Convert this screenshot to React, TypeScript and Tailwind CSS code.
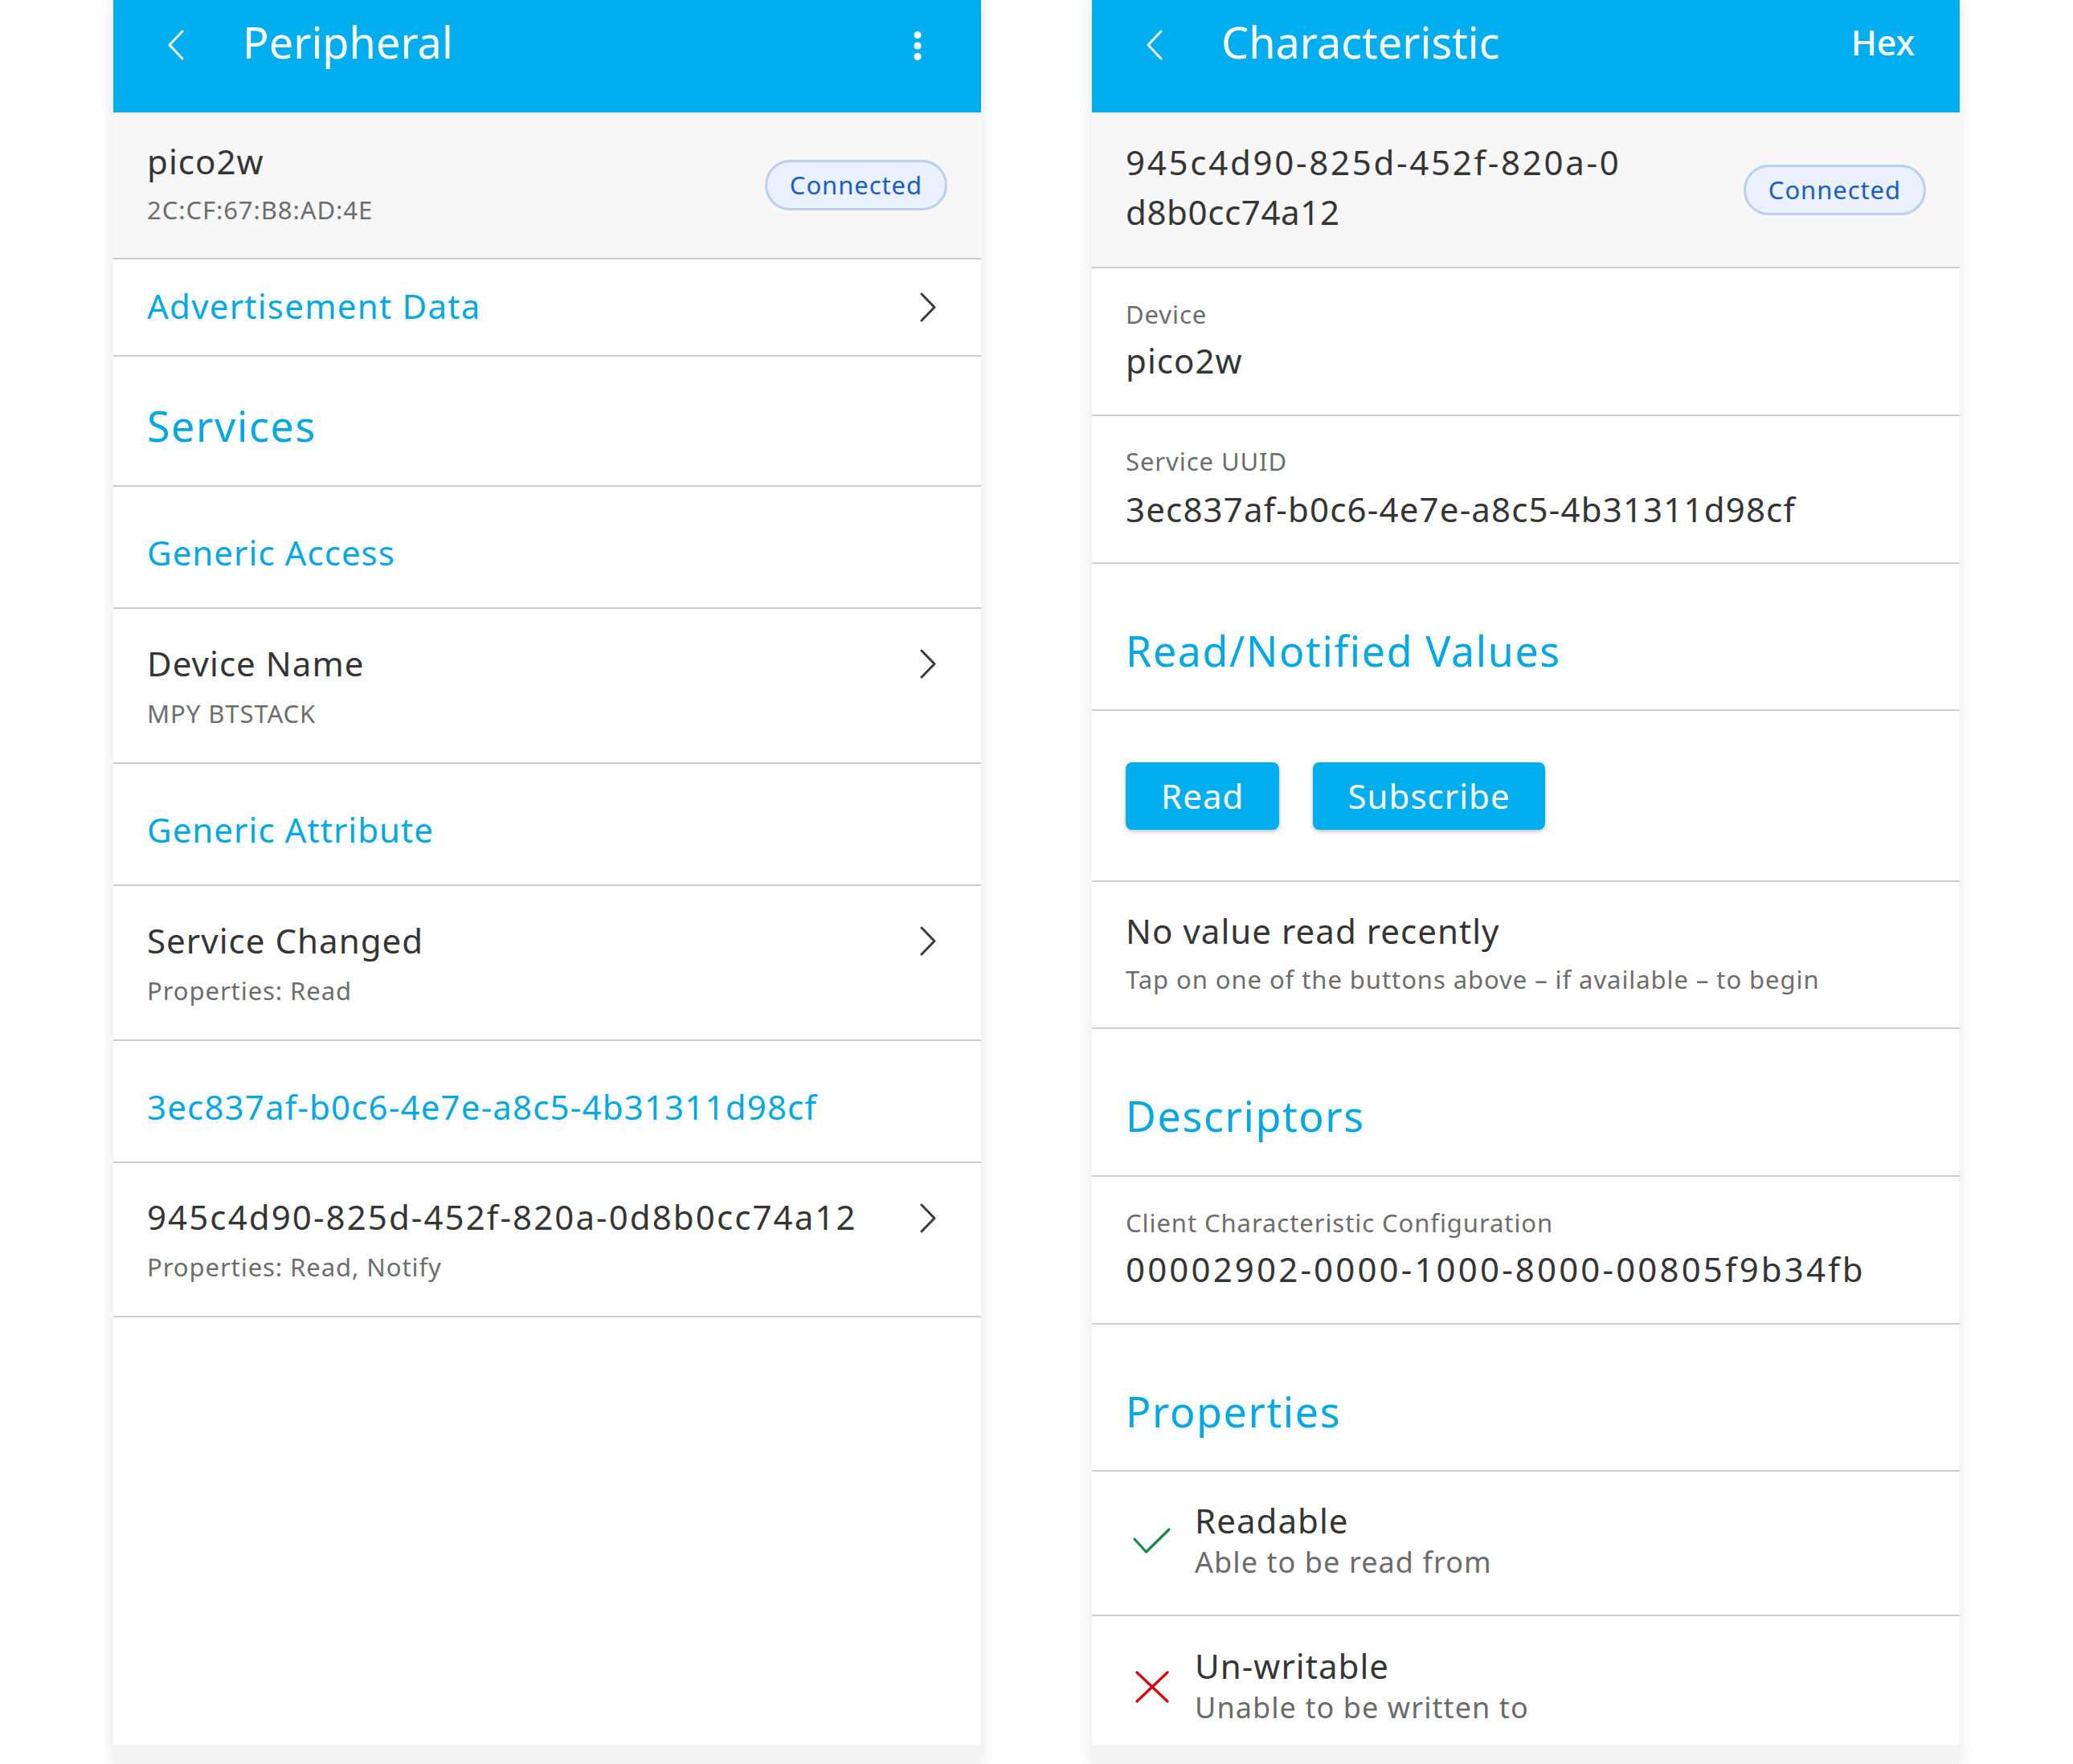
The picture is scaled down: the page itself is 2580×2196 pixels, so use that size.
import React from "react";

const BLUE = "text-[#05a8e4]";

function BackChevron() {
  return (
    <svg width="22" height="38" viewBox="0 0 22 38" className="shrink-0">
      <polyline points="19,2 3,19 19,36" fill="none" stroke="#ffffff" strokeWidth="2.8" strokeLinecap="round" strokeLinejoin="round" />
    </svg>
  );
}

function RowChevron({ className = "" }: { className?: string }) {
  return (
    <svg width="20" height="37" viewBox="0 0 20 37" className={"shrink-0 " + className}>
      <polyline points="2,2 18,18.5 2,35" fill="none" stroke="#3a3a3a" strokeWidth="3" strokeLinecap="round" strokeLinejoin="round" />
    </svg>
  );
}

function Kebab() {
  return (
    <svg width="10" height="36" viewBox="0 0 10 36" className="shrink-0 mt-[9px]">
      <circle cx="5" cy="4.5" r="4.5" fill="#ffffff" />
      <circle cx="5" cy="18" r="4.5" fill="#ffffff" />
      <circle cx="5" cy="31.5" r="4.5" fill="#ffffff" />
    </svg>
  );
}

function Header({ title, right }: { title: string; right: React.ReactNode }) {
  return (
    <div className="h-[140px] shrink-0 bg-[#00aeef]">
      <div className="h-[104px] flex items-center">
        <div className="ml-[67px] mt-[8px]">
          <BackChevron />
        </div>
        <div className="ml-[72px] text-[54px] leading-none text-white">{title}</div>
        <div className="flex-1" />
        {right}
      </div>
    </div>
  );
}

function Badge() {
  return (
    <div className="h-[63px] px-[28px] rounded-full border-[3px] border-[#b9cff1] bg-[#eaf1fc] flex items-center shrink-0">
      <span className="text-[31px] leading-none tracking-[0.03em] text-[#1b5cc7]">Connected</span>
    </div>
  );
}

const DIV = "border-b-2 border-[#c9cdd3]";
const PRIMARY = "text-[42px] text-[#353535]";
const T = "tracking-[0.025em]";
const SUB = "text-[31px] tracking-[0.03em] text-[#6d6d6d]";
const HEADING = "text-[52px] tracking-[0.03em] " + BLUE;

function GroupRow({ text, track = T }: { text: string; track?: string }) {
  return (
    <div className={"h-[152px] shrink-0 pt-[13px] px-[42px] flex items-center " + DIV}>
      <span className={"text-[42px] leading-none " + BLUE + " " + track}>{text}</span>
    </div>
  );
}

function CharRow({ title, sub, h, track = T }: { title: string; sub: string; h: string; track?: string }) {
  return (
    <div className={h + " shrink-0 pt-[4px] pl-[42px] pr-[56px] flex items-center justify-between " + DIV}>
      <div className="flex flex-col">
        <span className={PRIMARY + " leading-[64px] " + track}>{title}</span>
        <span className={SUB + " leading-[60px]"}>{sub}</span>
      </div>
      <RowChevron className="mb-[58px]" />
    </div>
  );
}

function LeftPanel() {
  return (
    <div className="w-[1080px] h-[2196px] shrink-0 flex flex-col bg-white shadow-[0_0_18px_rgba(0,0,0,0.10)]">
      <Header
        title="Peripheral"
        right={
          <div className="mr-[74px]">
            <Kebab />
          </div>
        }
      />
      <div className="flex-1 overflow-hidden flex flex-col">
        <div className={"h-[183px] shrink-0 bg-[#f7f7f7] px-[42px] flex items-center justify-between " + DIV}>
          <div className="flex flex-col">
            <span className={PRIMARY + " leading-[61px] " + T}>pico2w</span>
            <span className={SUB + " leading-[61px]"}>2C:CF:67:B8:AD:4E</span>
          </div>
          <Badge />
        </div>

        <div className={"h-[121px] shrink-0 pb-[4px] pl-[42px] pr-[56px] flex items-center justify-between " + DIV}>
          <span className={"text-[42px] tracking-[0.03em] leading-none " + BLUE}>Advertisement Data</span>
          <RowChevron className="mt-[4px]" />
        </div>

        <div className={"h-[162px] shrink-0 pt-[12px] px-[42px] flex items-center " + DIV}>
          <span className={HEADING + " leading-none"}>Services</span>
        </div>

        <GroupRow text="Generic Access" />
        <CharRow h="h-[193px]" title="Device Name" sub="MPY BTSTACK" />
        <GroupRow text="Generic Attribute" />
        <CharRow h="h-[193px]" title="Service Changed" sub="Properties: Read" />
        <GroupRow text="3ec837af-b0c6-4e7e-a8c5-4b31311d98cf" track="tracking-[0.028em]" />
        <CharRow
          h="h-[192px]"
          title="945c4d90-825d-452f-820a-0d8b0cc74a12"
          sub="Properties: Read, Notify"
          track="tracking-[0.05em]"
        />
      </div>
      <div className="h-[24px] shrink-0 bg-[#f4f4f4]" />
    </div>
  );
}

function InfoRow({ label, value, h, lead, pb, track = T }: { label: string; value: string; h: string; lead: string; pb: string; track?: string }) {
  return (
    <div className={h + " shrink-0 px-[42px] flex items-center " + pb + " " + DIV}>
      <div className="flex flex-col">
        <span className={SUB + " " + lead}>{label}</span>
        <span className={PRIMARY + " " + lead + " " + track}>{value}</span>
      </div>
    </div>
  );
}

function SectionRow({ text }: { text: string }) {
  return (
    <div className={"h-[183px] shrink-0 pt-[34px] px-[42px] flex items-center " + DIV}>
      <span className={HEADING + " leading-none"}>{text}</span>
    </div>
  );
}

function CheckIcon() {
  return (
    <svg width="48" height="34" viewBox="0 0 48 34" className="shrink-0">
      <polyline points="2,14 16.5,30 45,2" fill="none" stroke="#17894a" strokeWidth="3.2" strokeLinecap="round" strokeLinejoin="round" />
    </svg>
  );
}

function CrossIcon() {
  return (
    <svg width="42" height="40" viewBox="0 0 42 40" className="shrink-0">
      <line x1="2" y1="2" x2="40" y2="38" stroke="#d9000d" strokeWidth="3.2" strokeLinecap="round" />
      <line x1="40" y1="2" x2="2" y2="38" stroke="#d9000d" strokeWidth="3.2" strokeLinecap="round" />
    </svg>
  );
}

function PropRow({ icon, title, sub, border }: { icon: React.ReactNode; title: string; sub: string; border: boolean }) {
  return (
    <div className={"h-[180px] shrink-0 pl-[42px] flex items-center pb-[4px] " + (border ? DIV : "")}>
      <div className="w-[86px] shrink-0 flex items-center">{icon}</div>
      <div className="flex flex-col">
        <span className={PRIMARY + " leading-[52px] " + T}>{title}</span>
        <span className="text-[36px] tracking-[0.03em] text-[#6b6b6b] leading-[52px]">{sub}</span>
      </div>
    </div>
  );
}

function RightPanel() {
  return (
    <div className="w-[1080px] h-[2196px] shrink-0 flex flex-col bg-white shadow-[0_0_18px_rgba(0,0,0,0.10)]">
      <Header
        title="Characteristic"
        right={<span className="mr-[56px] text-[43px] font-medium leading-none text-white">Hex</span>}
      />
      <div className="flex-1 overflow-hidden flex flex-col">
        <div className={"h-[194px] shrink-0 bg-[#f7f7f7] px-[42px] pb-[7px] flex items-center justify-between " + DIV}>
          <div className="flex flex-col">
            <span className={PRIMARY + " leading-[62px] tracking-[0.065em]"}>945c4d90-825d-452f-820a-0</span>
            <span className={PRIMARY + " leading-[62px] tracking-[0.015em]"}>d8b0cc74a12</span>
          </div>
          <div className="pt-[7px]">
            <Badge />
          </div>
        </div>

        <InfoRow h="h-[184px]" label="Device" value="pico2w" lead="leading-[58px]" pb="pb-[10px]" />
        <InfoRow
          h="h-[184px]"
          label="Service UUID"
          value="3ec837af-b0c6-4e7e-a8c5-4b31311d98cf"
          lead="leading-[59px]"
          pb="pb-[11px]"
          track="tracking-[0.028em]"
        />
        <SectionRow text="Read/Notified Values" />

        <div className={"h-[213px] shrink-0 px-[42px] flex items-center gap-[42px] " + DIV}>
          <button className="h-[84px] px-[44px] rounded-[8px] bg-[#00aeef] text-white text-[42px] tracking-[0.025em] leading-none shadow-[0_2px_5px_rgba(0,0,0,0.25)]">
            Read
          </button>
          <button className="h-[84px] px-[43px] rounded-[8px] bg-[#00aeef] text-white text-[42px] tracking-[0.025em] leading-none shadow-[0_2px_5px_rgba(0,0,0,0.25)]">
            Subscribe
          </button>
        </div>

        <div className={"h-[183px] shrink-0 px-[42px] flex items-center " + DIV}>
          <div className="flex flex-col">
            <span className={PRIMARY + " leading-[60px] " + T}>No value read recently</span>
            <span className={SUB + " leading-[60px]"}>Tap on one of the buttons above – if available – to begin</span>
          </div>
        </div>

        <div className={"h-[184px] shrink-0 pt-[34px] px-[42px] flex items-center " + DIV}>
          <span className={HEADING + " leading-none"}>Descriptors</span>
        </div>

        <InfoRow
          h="h-[184px]"
          label="Client Characteristic Configuration"
          value="00002902-0000-1000-8000-00805f9b34fb"
          lead="leading-[58px]"
          pb="pb-[10px]"
          track="tracking-[0.075em]"
        />
        <SectionRow text="Properties" />

        <PropRow
          icon={<div className="ml-[9px]"><CheckIcon /></div>}
          title="Readable"
          sub="Able to be read from"
          border
        />
        <PropRow
          icon={<div className="ml-[12px]"><CrossIcon /></div>}
          title="Un-writable"
          sub="Unable to be written to"
          border={false}
        />
      </div>
      <div className="h-[24px] shrink-0 bg-[#f4f4f4]" />
    </div>
  );
}

export default function App() {
  return (
    <div className="w-[2580px] h-[2196px] bg-white flex pl-[141px] gap-[138px] overflow-hidden font-['Noto_Sans',sans-serif]">
      <LeftPanel />
      <RightPanel />
    </div>
  );
}
